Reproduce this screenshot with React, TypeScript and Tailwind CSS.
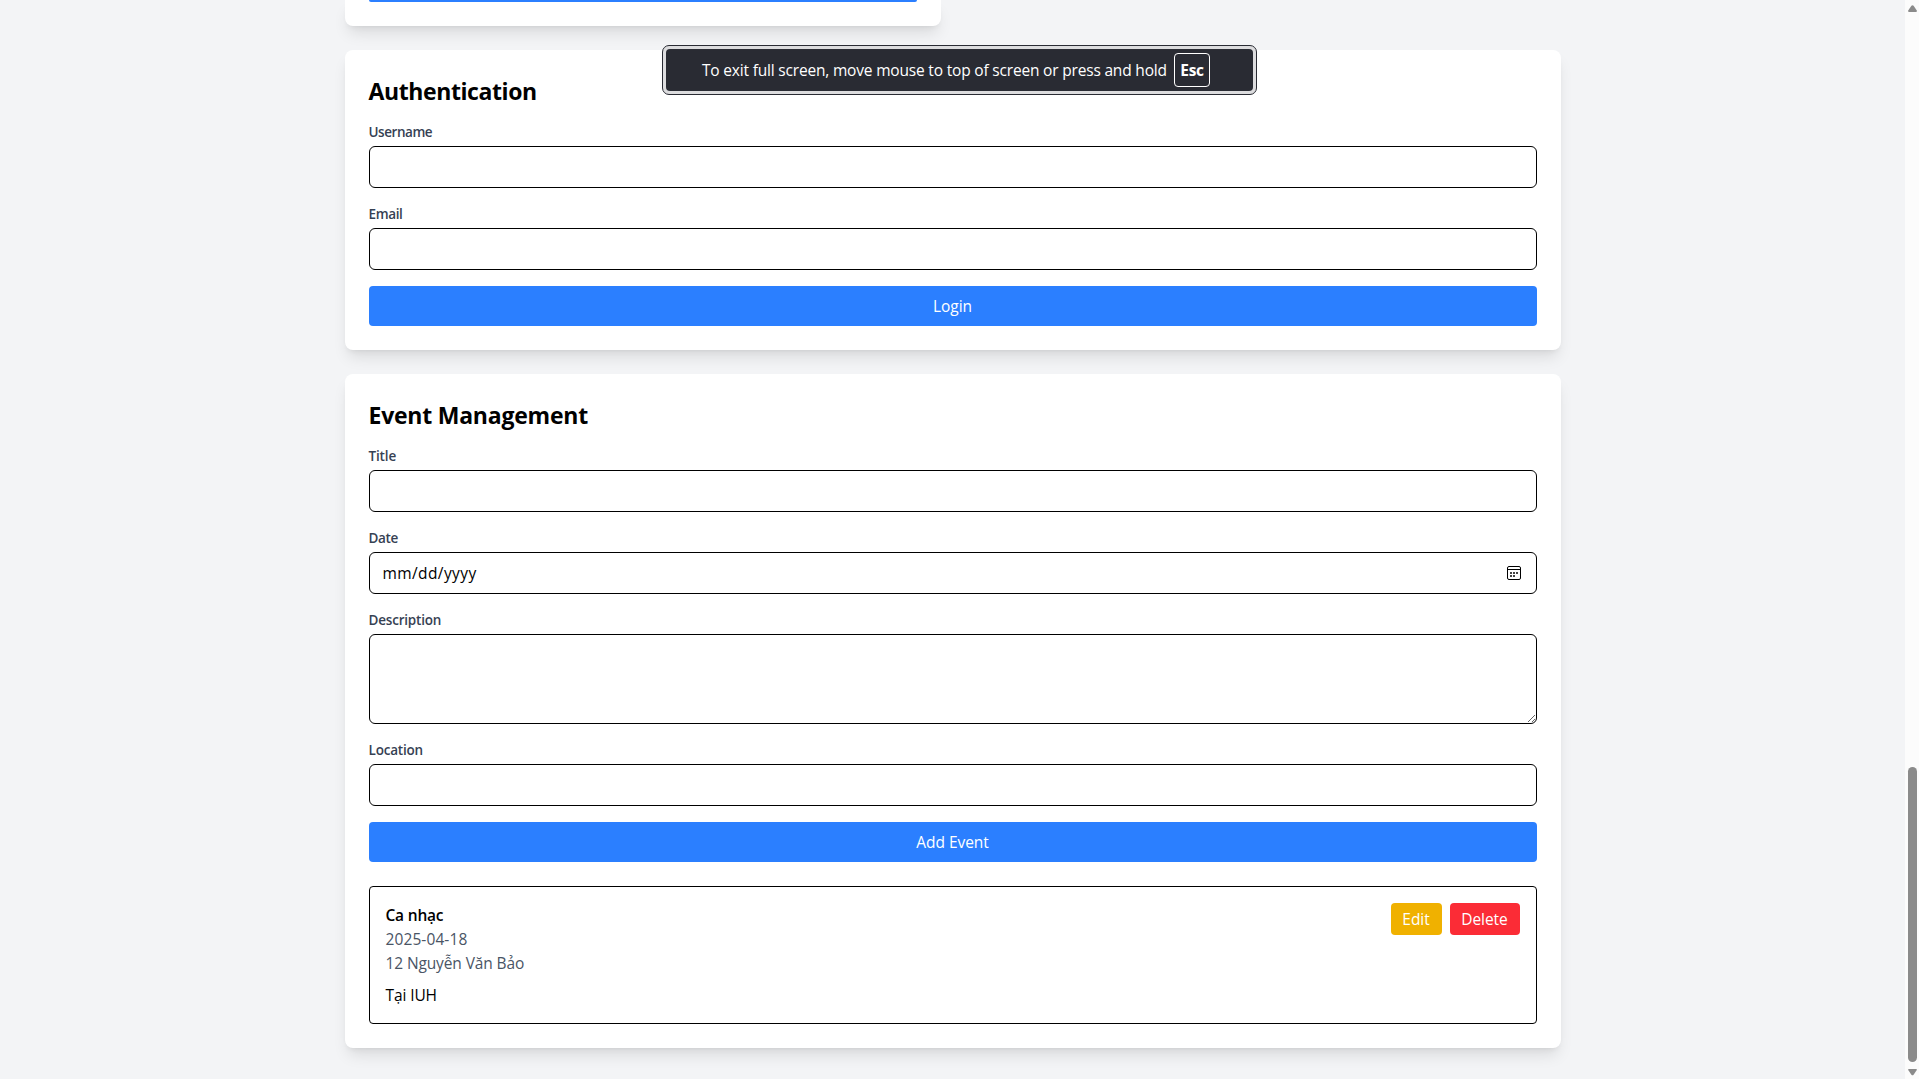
import React from "react";

const card = "rounded-lg bg-white p-6 shadow-lg";
const heading = "mb-[15px] pt-px text-[23px] leading-8 font-bold";
const field = "mt-1 block w-full rounded-md border border-black px-3 py-2";
const primary =
  "h-10 w-full rounded-sm bg-[#2b7fff] text-center text-white tracking-[-0.05px]";

function Field({
  label,
  tracking = "tracking-[-0.35px]",
  children,
}: {
  label: string;
  tracking?: string;
  children?: React.ReactNode;
}) {
  return (
    <div>
      <div className={`text-[13.5px] leading-5 font-semibold text-[#364153] ${tracking}`}>{label}</div>
      {children ?? <input type="text" aria-label={label} className={`${field} h-[42px]`} />}
    </div>
  );
}

function CalendarIcon() {
  return (
    <svg width="14" height="14" viewBox="0 0 14 14" className="mr-[2.5px]" fill="none">
      <rect x="0.5" y="0.5" width="13" height="13" rx="1.5" stroke="#000" />
      <path d="M1 3.5h12" stroke="#000" />
      <path d="M3 6h2v2H3zM6 6h2v2H6zM9 6h2v2H9zM3 9h2v2H3zM6 9h2v2H6z" fill="#444" />
    </svg>
  );
}

function FullscreenNotice() {
  return (
    <div className="absolute top-[45px] left-[662px] h-[50px] w-[595px] rounded-[7px] border border-[#292b33] bg-[#dcdcde] p-[3px]">
      <div className="flex h-full items-center rounded-[4px] bg-[#292b33] pl-9 text-white">
        <span className="w-[472px] whitespace-nowrap tracking-[-0.185px]">
          To exit full screen, move mouse to top of screen or press and hold
        </span>
        <span className="flex h-[34px] w-9 items-center justify-center rounded-[4px] border border-white font-bold tracking-[-0.35px]">
          Esc
        </span>
      </div>
    </div>
  );
}

function Scrollbar() {
  return (
    <div className="flex w-[14px] shrink-0 flex-col items-center bg-[#fcfcfc] pl-px">
      <svg width="9" height="8" viewBox="0 0 9 8" className="mt-[5px] shrink-0" fill="#8b8b8b">
        <path d="M3.4.8Q4.5-.4 5.6.8L8.8 5.4Q9.2 7 8 7H1Q-.2 7 .2 5.4Z" />
      </svg>
      <div className="mt-[754px] h-[295px] w-[9px] shrink-0 rounded-full bg-[#8b8b8b]" />
      <svg width="9" height="8" viewBox="0 0 9 8" className="mt-[6px] shrink-0" fill="#8b8b8b">
        <path d="M3.4 6.7Q4.5 7.9 5.6 6.7L8.8 2.1Q9.2 1 8 1H1Q-.2 1 .2 2.1Z" />
      </svg>
    </div>
  );
}

export default function App() {
  return (
    <div className="relative flex h-[1079px] w-full overflow-hidden bg-[#f3f4f6] font-['Open_Sans','Noto_Sans',sans-serif] text-[15.5px] leading-6 text-black">
      <div className="min-w-0 flex-1">
        <main className="mx-auto flex w-[1280px] flex-col gap-6 px-8">
          <section className="grid grid-cols-2 gap-6">
            <div className="flex h-[26px] flex-col rounded-b-lg bg-white px-6 shadow-lg">
              <div className="h-[2px] rounded-b-sm bg-[#2b7fff]" />
            </div>
          </section>

          <section className={card}>
            <h2 className={`${heading} tracking-[-0.4px]`}>Authentication</h2>
            <form className="space-y-4">
              <Field label="Username" tracking="tracking-[-0.45px]" />
              <Field label="Email" tracking="tracking-[-0.35px]" />
              <button type="button" className={primary}>Login</button>
            </form>
          </section>

          <section className={card}>
            <h2 className={`${heading} tracking-[-0.23px]`}>Event Management</h2>
            <form className="space-y-4">
              <Field label="Title" tracking="tracking-[-0.15px]" />
              <Field label="Date" tracking="tracking-[-0.35px]">
                <div className={`${field} flex h-[42px] items-center justify-between`}>
                  <span className="pl-px tracking-[0.4px]">mm/dd/yyyy</span>
                  <CalendarIcon />
                </div>
              </Field>
              <Field label="Description" tracking="tracking-[-0.2px]">
                <textarea rows={3} aria-label="Description" className={`${field} h-[90px]`} />
              </Field>
              <Field label="Location" tracking="tracking-[-0.2px]" />
              <button type="button" className={primary}>Add Event</button>
            </form>

            <div className="mt-6 flex items-start justify-between rounded-sm border border-black p-4">
              <div>
                <h3 className="font-semibold tracking-[-0.2px]">Ca nhạc</h3>
                <p className="tracking-[0.1px] text-[#4a5565]">2025-04-18</p>
                <p className="tracking-[-0.12px] text-[#4a5565]">12 Nguyễn Văn Bảo</p>
                <p className="mt-2 tracking-[-0.1px]">Tại IUH</p>
              </div>
              <div className="flex gap-2 text-center tracking-[-0.05px] text-white">
                <button type="button" className="h-8 w-[51px] rounded-sm bg-[#f0b100]">Edit</button>
                <button type="button" className="h-8 w-[70px] rounded-sm bg-[#fb2c36]">Delete</button>
              </div>
            </div>
          </section>
        </main>
      </div>
      <Scrollbar />
      <FullscreenNotice />
    </div>
  );
}
